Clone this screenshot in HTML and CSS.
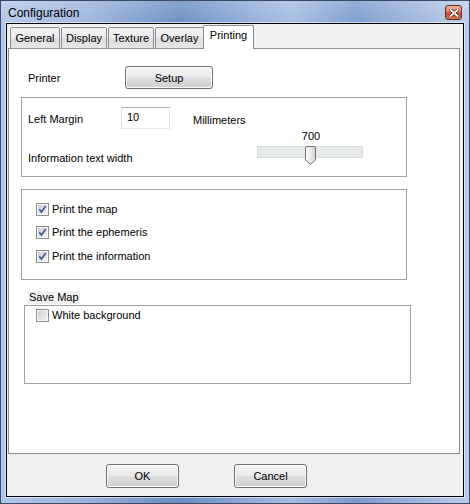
FILE: index.html
```html
<!DOCTYPE html>
<html>
<head>
<meta charset="utf-8">
<link rel="stylesheet" href="styles.css">
</head>
<body>
<div class="window">
  <div class="titlebar">
    <span class="title">Configuration</span>
    <span class="close"><svg width="10" height="8" viewBox="0 0 10 8"><path d="M1.5 1 L8.5 7 M8.5 1 L1.5 7" stroke="#5a1a10" stroke-width="3.2" stroke-linecap="square"/><path d="M1.5 1 L8.5 7 M8.5 1 L1.5 7" stroke="#fff" stroke-width="1.8" stroke-linecap="square"/></svg></span>
  </div>
  <div class="client">
    <div class="tabs">
      <div class="tab t-general">General</div>
      <div class="tab t-display">Display</div>
      <div class="tab t-texture">Texture</div>
      <div class="tab t-overlay">Overlay</div>
      <div class="tab selected">Printing</div>
    </div>
    <div class="panel">
      <div class="printer-row">
        <span class="printer-label">Printer</span>
        <button class="btn setup">Setup</button>
      </div>
      <div class="group group1">
        <div class="margin-row">
          <span class="lm-label">Left Margin</span>
          <span class="textbox">10</span>
          <span class="mm-label">Millimeters</span>
        </div>
        <div class="width-row">
          <span class="info-label">Information text width</span>
          <div class="slider-col">
            <div class="slider-value">700</div>
            <div class="slider">
              <div class="track"></div>
              <svg class="thumb" width="11" height="19" viewBox="0 0 11 19"><defs><linearGradient id="tg" x1="0" y1="0" x2="1" y2="0"><stop offset="0" stop-color="#fdfdfd"/><stop offset="1" stop-color="#d4d4d4"/></linearGradient></defs><path d="M0.5 2 Q0.5 0.5 2 0.5 L9 0.5 Q10.5 0.5 10.5 2 L10.5 14 L5.5 18.3 L0.5 14 Z" fill="url(#tg)" stroke="#707070"/></svg>
            </div>
          </div>
        </div>
      </div>
      <div class="group group2">
        <label class="check-row"><svg class="cb" width="13" height="13" viewBox="0 0 13 13"><defs><linearGradient id="cg" x1="0" y1="0" x2="1" y2="1"><stop offset="0" stop-color="#cfcfcf"/><stop offset="1" stop-color="#f4f4f4"/></linearGradient></defs><rect x="0.5" y="0.5" width="12" height="12" fill="#f6f6f6" stroke="#8e8f8f"/><rect x="2" y="2" width="9" height="9" fill="url(#cg)"/><path d="M3.3 6.3 L5.4 9 L9.8 3" fill="none" stroke="#3d5b98" stroke-width="1.7"/></svg><span>Print the map</span></label>
        <label class="check-row"><svg class="cb" width="13" height="13" viewBox="0 0 13 13"><rect x="0.5" y="0.5" width="12" height="12" fill="#f6f6f6" stroke="#8e8f8f"/><rect x="2" y="2" width="9" height="9" fill="url(#cg)"/><path d="M3.3 6.3 L5.4 9 L9.8 3" fill="none" stroke="#3d5b98" stroke-width="1.7"/></svg><span>Print the ephemeris</span></label>
        <label class="check-row"><svg class="cb" width="13" height="13" viewBox="0 0 13 13"><rect x="0.5" y="0.5" width="12" height="12" fill="#f6f6f6" stroke="#8e8f8f"/><rect x="2" y="2" width="9" height="9" fill="url(#cg)"/><path d="M3.3 6.3 L5.4 9 L9.8 3" fill="none" stroke="#3d5b98" stroke-width="1.7"/></svg><span>Print the information</span></label>
      </div>
      <div class="save-label">Save Map</div>
      <div class="group group3">
        <label class="check-row"><svg class="cb" width="13" height="13" viewBox="0 0 13 13"><rect x="0.5" y="0.5" width="12" height="12" fill="#f6f6f6" stroke="#8e8f8f"/><rect x="2" y="2" width="9" height="9" fill="url(#cg)"/></svg><span>White background</span></label>
      </div>
    </div>
    <div class="buttons">
      <button class="btn dlg">OK</button>
      <button class="btn dlg">Cancel</button>
    </div>
  </div>
</div>
</body>
</html>
```
FILE: styles.css
```css
html, body {
  margin: 0;
  padding: 0;
}
body {
  width: 470px;
  height: 504px;
  overflow: hidden;
  font-family: "Liberation Sans", Arial, sans-serif;
  font-size: 11px;
  color: #000;
}
.window {
  width: 470px;
  height: 504px;
  box-sizing: border-box;
  border: 1px solid #3d4c66;
  background:
    linear-gradient(to bottom, rgba(255,255,255,0.2), rgba(255,255,255,0) 30px),
    linear-gradient(to right, #b0c6e6 0%, #9ab4dc 18%, #6a8bc2 38%, #93aedb 55%, #a3bce2 62%, #7b99cc 76%, #b8cdeb 100%);
  display: flex;
  flex-direction: column;
}
.titlebar {
  height: 22px;
  display: flex;
  justify-content: space-between;
  align-items: flex-start;
}
.title {
  font-size: 12px;
  line-height: 24px;
  padding-left: 7px;
}
.close {
  width: 15px;
  height: 13px;
  margin-top: 4px;
  margin-right: 7px;
  border: 1px solid #6b2a20;
  border-radius: 3px;
  background: linear-gradient(to bottom, #eab0a0 0%, #d8806a 45%, #c4492f 55%, #d3785a 100%);
  display: flex;
  align-items: center;
  justify-content: center;
}
.client {
  flex: 1;
  margin: 0 5px 6px 5px;
  border: 1px solid #000;
  box-shadow: 0 0 0 1px rgba(235,242,250,0.7);
  background: #f0f0f0;
  padding: 1px 3px 0 1px;
  display: flex;
  flex-direction: column;
}
.tabs {
  display: flex;
  align-items: flex-end;
  height: 24px;
  padding-left: 2px;
  margin-bottom: -1px;
  position: relative;
  z-index: 1;
}
.tab {
  box-sizing: border-box;
  height: 22px;
  border: 1px solid #898c95;
  border-radius: 2px 2px 0 0;
  background: linear-gradient(to bottom, #f3f3f3 0%, #ebebeb 50%, #dedede 51%, #e5e5e5 100%);
  text-align: center;
  line-height: 20px;
  margin-right: 1px;
}
.t-general { width: 50px; }
.t-display { width: 46px; }
.t-texture { width: 46px; }
.t-overlay { width: 49px; }
.tab.selected {
  width: 51px;
  height: 24px;
  margin-left: -2px;
  background: #fff;
  border-bottom: none;
  line-height: 19px;
}
.panel {
  box-sizing: border-box;
  height: 406px;
  border: 1px solid #898c95;
  background: #fff;
  display: flex;
  flex-direction: column;
  align-items: flex-start;
}
.printer-row {
  display: flex;
  align-items: center;
  margin-top: 17px;
  padding-left: 19px;
  height: 23px;
}
.printer-label {
  width: 97px;
}
.btn {
  box-sizing: border-box;
  font-family: "Liberation Sans", Arial, sans-serif;
  font-size: 11px;
  color: #000;
  border: 1px solid #707070;
  border-radius: 3px;
  background: linear-gradient(to bottom, #f2f2f2 0%, #ebebeb 48%, #dddddd 52%, #cfcfcf 100%);
  box-shadow: inset 0 0 0 1px #fbfbfb;
  padding: 0;
  margin: 0;
}
.setup {
  width: 88px;
  height: 23px;
}
.group {
  box-sizing: border-box;
  border: 1px solid #a0a0a0;
  background: #fff;
}
.group1 {
  width: 386px;
  height: 80px;
  margin: 8px 0 0 12px;
  padding: 9px 0 0 6px;
}
.margin-row {
  display: flex;
  align-items: center;
  height: 22px;
}
.lm-label {
  width: 93px;
  margin-top: 2px;
}
.textbox {
  box-sizing: border-box;
  width: 49px;
  height: 22px;
  border: 1px solid #e2e3ea;
  border-top-color: #abadb3;
  border-bottom-color: #e3e9ef;
  padding-left: 5px;
  line-height: 18px;
}
.mm-label {
  margin-left: 23px;
  margin-top: 3px;
}
.width-row {
  display: flex;
  align-items: flex-start;
}
.info-label {
  width: 229px;
  line-height: 13px;
  margin-top: 23px;
}
.slider-col {
  width: 106px;
  margin-top: 1px;
}
.slider-value {
  text-align: center;
  line-height: 13px;
  padding-left: 2px;
}
.slider {
  position: relative;
  height: 19px;
  margin-top: 3px;
}
.track {
  box-sizing: border-box;
  height: 12px;
  margin-top: 3px;
  background: #e7eaea;
  border: 1px solid #d9dcdc;
}
.thumb {
  position: absolute;
  left: 48px;
  top: 0;
}
.group2 {
  width: 386px;
  height: 91px;
  margin: 12px 0 0 12px;
  padding: 13px 0 0 14px;
  display: flex;
  flex-direction: column;
}
.check-row {
  display: flex;
  align-items: center;
  height: 13px;
  line-height: 13px;
}
.check-row .cb {
  flex: none;
  margin-right: 3px;
}
.group2 .check-row + .check-row {
  margin-top: 10px;
}
.group2 .check-row:nth-child(3) {
  margin-top: 11px;
}
.save-label {
  margin: 11px 0 0 19px;
  background: #f0f0f0;
  padding: 0 1px;
  white-space: nowrap;
  height: 13px;
  line-height: 12px;
}
.group3 {
  width: 387px;
  height: 79px;
  margin: 1px 0 0 15px;
  padding: 3px 0 0 11px;
}
.buttons {
  display: flex;
  padding: 10px 0 0 98px;
  gap: 55px;
}
.dlg {
  width: 73px;
  height: 24px;
}
```
